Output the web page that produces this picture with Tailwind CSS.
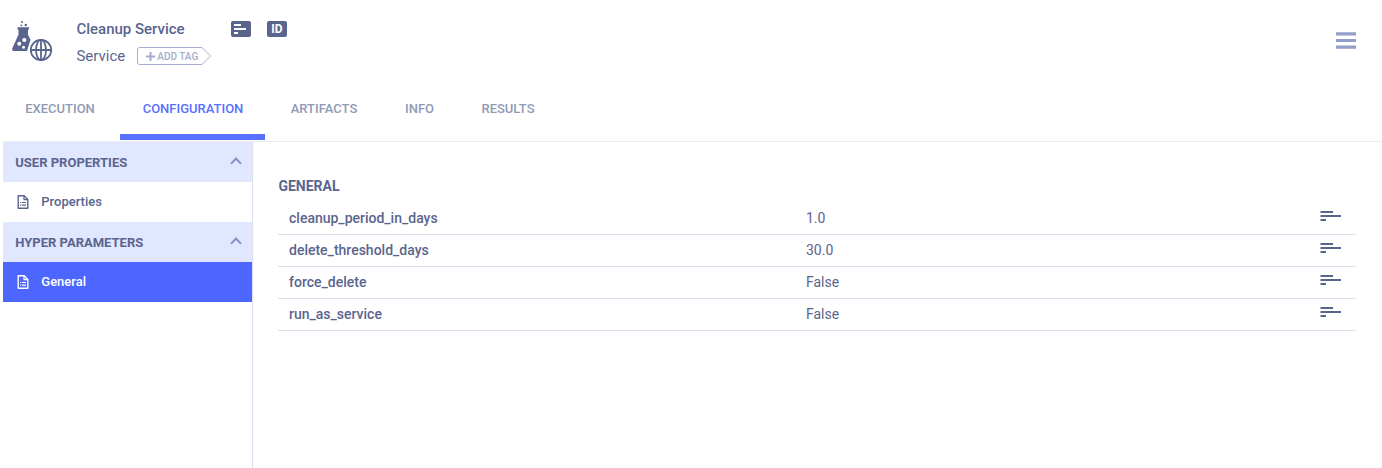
<!DOCTYPE html>
<html lang="en">
<head>
<meta charset="utf-8">
<title>Cleanup Service</title>
<script src="https://cdn.jsdelivr.net/npm/@tailwindcss/browser@4"></script>
</head>
<body class="h-[468px] overflow-hidden bg-white font-[Roboto,sans-serif] text-[#5a658e]">
<svg class="hidden">
  <symbol id="doc" viewBox="0 0 12 14">
    <path d="M1.2.8h6l3.6 3.6v8.8H1.2z" fill="none" stroke="currentColor" stroke-width="1.4" stroke-linejoin="round"/>
    <path d="M7 .8v3.8h3.8" fill="none" stroke="currentColor" stroke-width="1.2"/>
    <path d="M3 7.5h1.2M5 7.5h4M3 10.2h1.2M5 10.2h4" stroke="currentColor" stroke-width="1.2"/>
  </symbol>
  <symbol id="chev" viewBox="0 0 12 8">
    <path d="M1 6.8L6 1.5l5 5.3" fill="none" stroke="currentColor" stroke-width="1.9"/>
  </symbol>
  <symbol id="lines" viewBox="0 0 21 10">
    <path d="M.5 1H13M.5 5H21M.5 9H6" stroke="currentColor" stroke-width="2"/>
  </symbol>
</svg>
<div class="flex h-full flex-col">
  <header class="flex h-[86px] shrink-0 items-start pl-[11px] pr-[26px]">
    <svg class="mt-5 h-[42px] w-[42px] shrink-0" viewBox="0 0 42 42" fill="none">
      <circle cx="11" cy="2" r="1" fill="#5a658e"/><circle cx="14.8" cy="5" r="1.2" fill="#5a658e"/><circle cx="10.4" cy="5.4" r=".9" fill="#5a658e"/>
      <path d="M6.500 7.300h11.500v2.200H17v5.200l2.500 5-3.500 11.300H2.500Q.6 30.700 1.200 28.600L7.500 14.500V9.500h-1z" fill="#5a658e"/>
      <circle cx="13.300" cy="20" r="2.100" fill="#fff"/><circle cx="8.300" cy="23.800" r="2" fill="#fff"/><circle cx="12.500" cy="27.200" r="1.500" fill="#fff"/>
      <circle cx="30" cy="30" r="12.400" fill="#fff"/>
      <g stroke="#5a658e" stroke-width="1.800"><circle cx="30" cy="30" r="10.200"/><ellipse cx="30" cy="30" rx="5" ry="10.200"/><path d="M19.800 30h20.400M30 19.800v20.400"/></g>
    </svg>
    <div class="ml-[23.400px] mt-[19px]">
      <div class="flex h-5 items-center">
        <div class="w-[154.600px] text-[15px] leading-5 font-medium whitespace-nowrap">Cleanup Service</div>
        <svg class="h-4 w-5" viewBox="0 0 20 16"><rect width="20" height="16" rx="2" fill="#5a658e"/><path d="M3 4h7M3 8h12M3 12h4" stroke="#fff" stroke-width="2"/></svg>
        <div class="ml-[16px] flex h-4 w-5 items-center justify-center rounded-[2px] bg-[#5a658e] text-[12px] leading-none font-bold text-white">ID</div>
      </div>
      <div class="mt-[7px] flex h-5 items-center">
        <div class="w-[60.600px] text-[15px] leading-5">Service</div>
        <div class="grid h-[18px] w-[75px]">
          <svg class="col-start-1 row-start-1 h-[18px] w-[75px]" viewBox="0 0 75 18"><path d="M2.500.5H65L73.500 9l-8.500 8.500H2.500a2 2 0 0 1-2-2v-13a2 2 0 0 1 2-2z" fill="none" stroke="#a4adcd"/><path d="M9 9.500h9M13.500 5v9" stroke="#a4adcd" stroke-width="2"/></svg>
          <div class="col-start-1 row-start-1 pl-[20.300px] text-[10px] leading-[19px] font-medium whitespace-nowrap text-[#a4adcd]">ADD TAG</div>
        </div>
      </div>
    </div>
    <svg class="mt-[32px] ml-auto h-[17px] w-5" viewBox="0 0 20 17"><path d="M0 1.800h20M0 8.500h20M0 15.200h20" stroke="#929fca" stroke-width="3.200"/></svg>
  </header>
  <nav class="flex h-[54px] shrink-0 gap-[3px] pl-[2px] text-[13px] leading-[46px] font-medium text-[#8f9bb3]">
    <div class="w-[115px] pl-[1px] text-center">EXECUTION</div>
    <div class="w-[145px] border-b-[6px] border-[#5870ff] pl-[1px] text-center text-[#5870ff]">CONFIGURATION</div>
    <div class="w-[112px] text-center">ARTIFACTS</div>
    <div class="w-[73px] text-center">INFO</div>
    <div class="w-[98px] text-center">RESULTS</div>
  </nav>
  <main class="mt-px ml-[3px] flex min-h-0 flex-1 border-t border-[#ececf0]">
    <aside class="w-[250px] shrink-0 border-r border-[#dcdfee] text-[13px] font-medium">
      <div class="flex h-10 items-center justify-between bg-[#e1e7ff] pr-[10px] pl-[12.300px] font-bold"><span class="pt-[2px]">USER PROPERTIES</span><svg class="mb-[3px] h-2 w-3 text-[#8492c2]"><use href="#chev"/></svg></div>
      <div class="flex h-10 items-center pl-[14.300px]"><svg class="mr-3 h-[14px] w-[12px]"><use href="#doc"/></svg>Properties</div>
      <div class="flex h-10 items-center justify-between bg-[#e1e7ff] pr-[10px] pl-[12.300px] font-bold"><span class="pt-[2px]">HYPER PARAMETERS</span><svg class="mb-[3px] h-2 w-3 text-[#8492c2]"><use href="#chev"/></svg></div>
      <div class="flex h-10 items-center bg-[#4d66ff] pl-[14.300px] text-white"><svg class="mr-3 h-[14px] w-[12px]"><use href="#doc"/></svg>General</div>
    </aside>
    <section class="flex-1 pt-[34px] pr-[26px] pl-[25px] text-[14px]">
      <h2 class="h-[27px] pl-[0.400px] leading-5 font-bold">GENERAL</h2>
      <div class="flex h-8 border-b border-[#dce0ee] pr-[15px] pl-[11px] leading-[30px]"><div class="w-[517px] font-medium">cleanup_period_in_days</div><div>1.0</div><svg class="mt-[8px] ml-auto h-[10px] w-[21px]"><use href="#lines"/></svg></div>
      <div class="flex h-8 border-b border-[#dce0ee] pr-[15px] pl-[11px] leading-[30px]"><div class="w-[517px] font-medium">delete_threshold_days</div><div>30.0</div><svg class="mt-[8px] ml-auto h-[10px] w-[21px]"><use href="#lines"/></svg></div>
      <div class="flex h-8 border-b border-[#dce0ee] pr-[15px] pl-[11px] leading-[30px]"><div class="w-[517px] font-medium">force_delete</div><div>False</div><svg class="mt-[8px] ml-auto h-[10px] w-[21px]"><use href="#lines"/></svg></div>
      <div class="flex h-8 border-b border-[#dce0ee] pr-[15px] pl-[11px] leading-[30px]"><div class="w-[517px] font-medium">run_as_service</div><div>False</div><svg class="mt-[8px] ml-auto h-[10px] w-[21px]"><use href="#lines"/></svg></div>
    </section>
  </main>
</div>
</body>
</html>
